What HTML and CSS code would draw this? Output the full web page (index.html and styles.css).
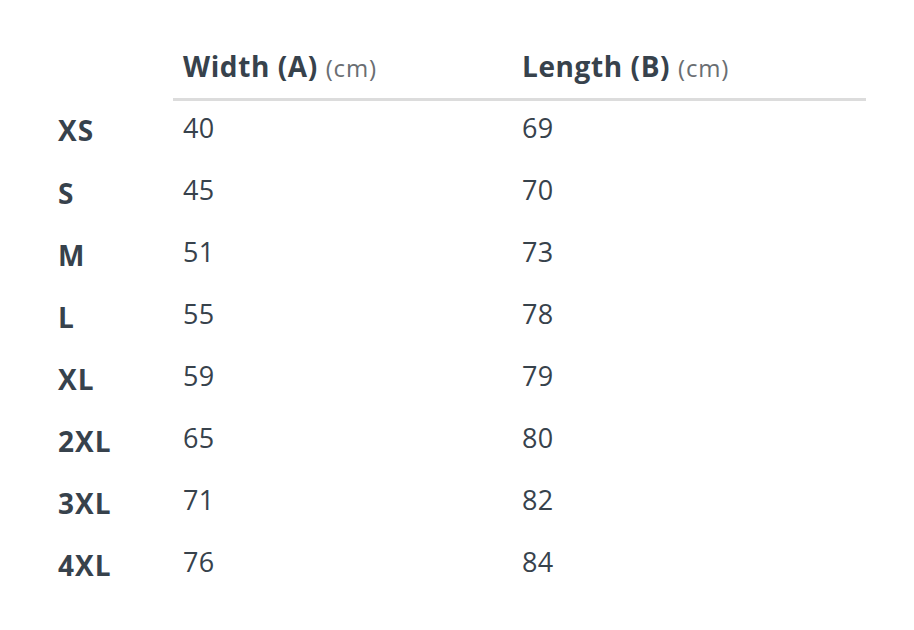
FILE: index.html
```html
<!DOCTYPE html>
<html lang="en">
<head>
<meta charset="utf-8">
<title>Size chart</title>
<link rel="stylesheet" href="styles.css">
</head>
<body>
<main class="page">
  <table class="sizes">
    <thead>
      <tr>
        <th class="corner"></th>
        <th class="head col-a">Width (A) <span class="unit">(cm)</span></th>
        <th class="head col-b">Length (B) <span class="unit">(cm)</span></th>
      </tr>
    </thead>
    <tbody>
      <tr><th class="size">XS</th><td>40</td><td>69</td></tr>
      <tr><th class="size">S</th><td>45</td><td>70</td></tr>
      <tr><th class="size">M</th><td>51</td><td>73</td></tr>
      <tr><th class="size">L</th><td>55</td><td>78</td></tr>
      <tr><th class="size">XL</th><td>59</td><td>79</td></tr>
      <tr><th class="size">2XL</th><td>65</td><td>80</td></tr>
      <tr><th class="size">3XL</th><td>71</td><td>82</td></tr>
      <tr><th class="size">4XL</th><td>76</td><td>84</td></tr>
    </tbody>
  </table>
</main>
</body>
</html>
```
FILE: styles.css
```css
html, body {
  margin: 0;
  padding: 0;
  background: #ffffff;
}
body {
  font-family: "Open Sans", Lato, sans-serif;
  color: #37424c;
}
.page {
  padding: 40px 0 0 48px;
}
.sizes {
  border-collapse: collapse;
  table-layout: fixed;
  width: 818px;
}
.corner {
  width: 125px;
  padding: 0;
}
.col-a { width: 319px; }
.head {
  text-align: left;
  font-weight: 700;
  font-size: 28px;
  line-height: 38px;
  letter-spacing: 0.6px;
  padding: 0 10px 11px 10px;
  height: 47px;
  vertical-align: bottom;
  border-bottom: 3px solid #dcdcdc;
  white-space: nowrap;
}
.unit {
  font-weight: 400;
  font-size: 24px;
  color: #6a6e72;
  letter-spacing: 0.8px;
}
.size {
  text-align: left;
  font-weight: 700;
  font-size: 28px;
  line-height: 38px;
  letter-spacing: 1px;
  padding: 0 10px 2px 10px;
  height: 60px;
  vertical-align: middle;
}
td {
  font-size: 27px;
  font-weight: 400;
  line-height: 38px;
  letter-spacing: 0.4px;
  padding: 0 10px 9px 10px;
  height: 53px;
  vertical-align: middle;
}
```
